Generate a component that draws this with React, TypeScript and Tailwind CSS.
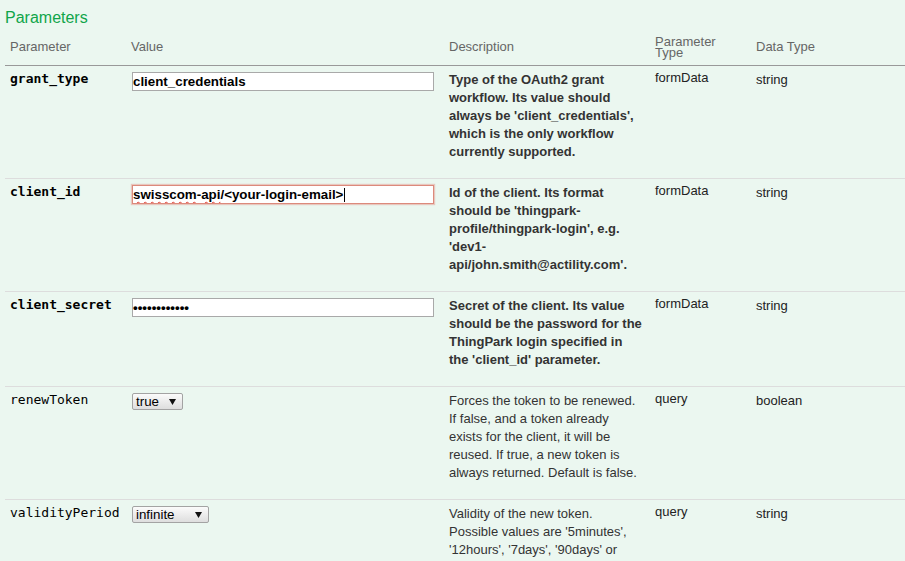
import React from "react";

type Row = {
  name: string;
  required: boolean;
  value: React.ReactNode;
  desc: string;
  ptype: string;
  dtype: string;
};

function TextBox({ children, error }: { children: React.ReactNode; error?: boolean }) {
  return (
    <div
      className={
        "ml-[1px] mt-[1px] flex h-[19px] w-[302px] items-center overflow-hidden whitespace-nowrap bg-white text-[13.333px] font-bold leading-[17px] text-black " +
        (error
          ? "border border-[#dc8a7c] shadow-[0_0_1px_1px_rgba(229,160,150,0.55)]"
          : "border border-[#a9a9a9]")
      }
    >
      {children}
    </div>
  );
}

function Caret() {
  return <span className="ml-[1px] inline-block h-[14px] w-[1px] bg-black align-middle" />;
}

function Triangle() {
  return (
    <svg width="7" height="6" viewBox="0 0 7 6" className="shrink-0">
      <polygon points="0,0 7,0 3.5,6" fill="#111" />
    </svg>
  );
}

function SelectBox({ label, wide }: { label: string; wide?: boolean }) {
  return (
    <div
      className={
        "ml-[1px] mt-[1px] flex h-[17px] items-center justify-between rounded-[2px] border border-[#a3a3a3] bg-gradient-to-b from-[#fbfbfb] to-[#dedede] pl-[3px] pr-[6px] text-[13.333px] leading-[15px] text-black " +
        (wide ? "w-[77px]" : "w-[51px]")
      }
    >
      <span>{label}</span>
      <Triangle />
    </div>
  );
}

const squiggle =
  "underline decoration-[#e0453a] decoration-wavy decoration-[1px] underline-offset-[2px]";

const rows: Row[] = [
  {
    name: "grant_type",
    required: true,
    value: <TextBox>client_credentials</TextBox>,
    desc:
      "Type of the OAuth2 grant workflow. Its value should always be 'client_credentials', which is the only workflow currently supported.",
    ptype: "formData",
    dtype: "string",
  },
  {
    name: "client_id",
    required: true,
    value: (
      <TextBox error>
        <span className={squiggle}>swisscom</span>-<span className={squiggle}>api</span>/&lt;your-login-email&gt;
        <Caret />
      </TextBox>
    ),
    desc:
      "Id of the client. Its format should be 'thingpark-profile/thingpark-login', e.g. 'dev1-api/john.smith@actility.com'.",
    ptype: "formData",
    dtype: "string",
  },
  {
    name: "client_secret",
    required: true,
    value: <TextBox>{"\u2022".repeat(12)}</TextBox>,
    desc:
      "Secret of the client. Its value should be the password for the ThingPark login specified in the 'client_id' parameter.",
    ptype: "formData",
    dtype: "string",
  },
  {
    name: "renewToken",
    required: false,
    value: <SelectBox label="true" />,
    desc:
      "Forces the token to be renewed. If false, and a token already exists for the client, it will be reused. If true, a new token is always returned. Default is false.",
    ptype: "query",
    dtype: "boolean",
  },
  {
    name: "validityPeriod",
    required: false,
    value: <SelectBox label="infinite" wide />,
    desc:
      "Validity of the new token. Possible values are '5minutes', '12hours', '7days', '90days' or 'infinite'. Default is 'infinite'.",
    ptype: "query",
    dtype: "string",
  },
];

export default function App() {
  return (
    <div className="min-h-screen overflow-hidden bg-[#ebf7f0] pl-[5px] pt-[8px] font-['Liberation_Sans',Arial,sans-serif]">
      <h4 className="h-[20px] text-[16px] font-normal leading-[20px] text-[#10a54a]">Parameters</h4>

      <div className="grid h-[38px] grid-cols-[126px_318px_206px_101px_1fr] items-center border-b border-[#999999] text-[13px] leading-[11px] text-[#666666]">
        <div className="pl-[5px]">Parameter</div>
        <div>Value</div>
        <div>Description</div>
        <div className="pr-[10px]">Parameter Type</div>
        <div>Data Type</div>
      </div>

      {rows.map((r) => (
        <div
          key={r.name}
          className="grid grid-cols-[126px_318px_206px_101px_1fr] items-start border-b border-[#dddddd] pt-[5px]"
        >
          <div
            className={
              "-mt-[1px] pl-[5px] font-['DejaVu_Sans_Mono',monospace] text-[13px] leading-[18px] text-black " +
              (r.required ? "font-bold" : "font-normal")
            }
          >
            {r.name}
          </div>
          <div>{r.value}</div>
          <div
            className={
              "pb-[17px] pr-[10px] text-[13px] leading-[18px] text-[#333333] " +
              (r.required ? "font-bold" : "font-normal")
            }
          >
            {r.desc}
          </div>
          <div className="-mt-[2px] text-[13px] leading-[18px] text-[#222222]">{r.ptype}</div>
          <div className="text-[13px] leading-[18px] text-[#222222]">{r.dtype}</div>
        </div>
      ))}
    </div>
  );
}
